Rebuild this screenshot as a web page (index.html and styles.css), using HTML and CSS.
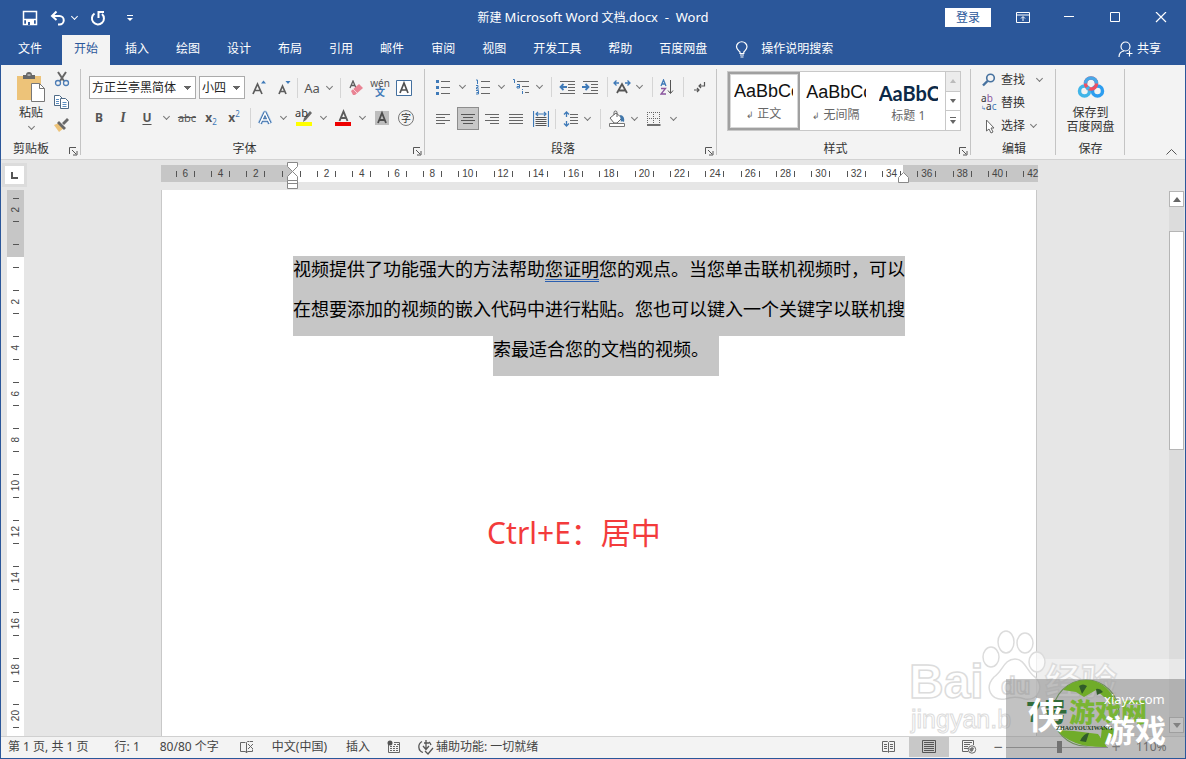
FILE: index.html
```html
<!DOCTYPE html>
<html lang="zh-CN">
<head>
<meta charset="utf-8">
<meta name="viewport" content="width=device-width, initial-scale=1">
<title>新建 Microsoft Word 文档.docx - Word</title>
<link rel="stylesheet" href="styles.css">
</head>
<body>
<header class="titlebar">
  <div class="quick">
    <button aria-label="保存"><svg width="16" height="16" viewBox="0 0 16 16"><path d="M1.500 1.500h13v13h-13zM2 9.500h12" fill="none" stroke="#fff" stroke-width="1.500"/><path d="M4 10h8v4H4z" fill="#fff"/><path d="M6 12h2v3H6z" fill="#2b579a"/></svg></button>
    <button aria-label="撤消"><svg width="16" height="16" viewBox="0 0 16 16"><path d="M2 6h7.500a4 4 0 0 1 0 8.500H8M6.500 1.500L2 6l4.500 4" fill="none" stroke="#fff" stroke-width="2"/></svg></button>
    <button class="chev light" aria-label="撤消列表"></button>
    <button class="redo" aria-label="重复"><svg width="16" height="16" viewBox="0 0 16 16"><path d="M4.500 3.500A6 6 0 1 0 12 4M8.500 8V2H14" fill="none" stroke="#fff" stroke-width="2"/></svg></button>
    <button class="custom" aria-label="自定义快速访问工具栏"><svg width="8" height="8" viewBox="0 0 8 8"><path d="M1 1.500h6" stroke="#fff"/><path d="M1 4h6L4 7z" fill="#fff"/></svg></button>
  </div>
  <h1 class="doc-title">新建 <span>Microsoft Word</span> 文档<span>.docx&nbsp; -&nbsp; Word</span></h1>
  <div class="window-tools">
    <button class="login">登录</button>
    <button class="win" aria-label="功能区显示选项"><svg width="14" height="12" viewBox="0 0 14 12"><path d="M.5.5h13v10H.5zM.5 3h13M7 9V5M5 6.500l2-2 2 2" fill="none" stroke="#fff"/></svg></button>
    <button class="win" aria-label="最小化"><svg width="12" height="12" viewBox="0 0 12 12"><path d="M1 4.500h10" stroke="#fff"/></svg></button>
    <button class="win" aria-label="最大化"><svg width="12" height="12" viewBox="0 0 12 12"><path d="M1.500.5h9v9h-9z" fill="none" stroke="#fff"/></svg></button>
    <button class="win" aria-label="关闭"><svg width="12" height="12" viewBox="0 0 12 12"><path d="M1 0l10 10M11 0L1 10" stroke="#fff" stroke-width="1.200"/></svg></button>
  </div>
</header>
<nav class="tabs">
  <button class="file">文件</button>
  <button class="active">开始</button>
  <button>插入</button><button>绘图</button><button>设计</button><button>布局</button><button>引用</button><button>邮件</button><button>审阅</button><button>视图</button><button>开发工具</button><button>帮助</button><button>百度网盘</button>
  <button class="tell"><svg width="14" height="17" viewBox="0 0 14 17"><path d="M5 12.500V11C3 9 1.500 8 1.500 5.800a5.200 5 0 0 1 10.500 0C12 8 10.500 9 8.800 11v1.500zM5 14h4M5.500 16h3" fill="none" stroke="#fff" stroke-width="1.200"/></svg>操作说明搜索</button>
  <button class="share"><svg width="16" height="17" viewBox="0 0 16 17"><circle cx="7.500" cy="5.500" r="4.500" fill="none" stroke="#fff" stroke-width="1.200"/><path d="M1 16c0-3 2-5.500 5-6M11.500 9.500v6M8.500 12.500h6" fill="none" stroke="#fff" stroke-width="1.200"/></svg>共享</button>
</nav>

<main class="ribbon">
  <section class="group clipboard">
    <div class="clip-body">
      <button class="paste"><svg width="28" height="30" viewBox="0 0 28 30"><path d="M0 4h24v24H0z" fill="#edc379"/><path d="M6 3h3a3 3 0 0 1 6 0h3v4H6z" fill="#686868"/><path d="M10.500 3h3" stroke="#eee"/><path d="M14.500 11.500h8l5 5v13h-13z" fill="#fff" stroke="#777"/><path d="M22.500 11.500v5h5" fill="none" stroke="#777"/></svg><span>粘贴</span><i class="chev"></i></button>
      <div class="clip-side">
        <button aria-label="剪切"><svg width="16" height="16" viewBox="0 0 16 16"><path d="M4 1l6 9M12 1L6 10" stroke="#666" stroke-width="2"/><circle cx="4" cy="12" r="2.500" fill="none" stroke="#4c7cb5" stroke-width="1.300"/><circle cx="12" cy="12" r="2.500" fill="none" stroke="#4c7cb5" stroke-width="1.300"/></svg></button>
        <button aria-label="复制"><svg width="16" height="16" viewBox="0 0 16 16"><path d="M.5 1.500h5l3 3v7h-8z" fill="#fff" stroke="#4e6a86"/><path d="M6.500 4.500h5l3 3v7h-8z" fill="#fff" stroke="#4e6a86"/><path d="M2 5.500h3M2 7.500h3M2 9.500h3M8.500 8.500h4M8.500 10.500h4M8.500 12.500h4" stroke="#5b8dc0"/></svg></button>
        <button aria-label="格式刷"><svg width="16" height="16" viewBox="0 0 16 16"><path d="M0 8l5-2 5 5-5 4z" fill="#edc379"/><path d="M5 4l7 7-2 2-7-7zM8 6l5-5 2 2-5 5z" fill="#686868"/></svg></button>
      </div>
    </div>
    <h2>剪贴板</h2><button class="launch" aria-label="剪贴板设置"><svg width="9" height="9" viewBox="0 0 9 9"><path d="M.5 7V.5H7M3 3l4 4M8 4v4H4" fill="none" stroke="#555"/></svg></button>
  </section>

  <section class="group font">
    <div class="row font-a">
      <select class="face" aria-label="字体"><option>方正兰亭黑简体</option></select>
      <select class="size" aria-label="字号"><option>小四</option></select>
      <button aria-label="增大字号"><svg width="16" height="16" viewBox="0 0 16 16"><path d="M2 14L6.500 4l4.500 10M3.500 10.500h6" fill="none" stroke="#5c5c5c" stroke-width="1.700"/><path d="M10 3.500h5L12.500.5z" fill="#3f7ab8"/></svg></button>
      <button aria-label="减小字号"><svg width="16" height="16" viewBox="0 0 16 16"><path d="M3 14l3.500-8 3.500 8M4.500 11.500h4" fill="none" stroke="#5c5c5c" stroke-width="1.700"/><path d="M9.500 1h5L12 4z" fill="#3f7ab8"/></svg></button>
      <i class="sep"></i>
      <button class="aa" aria-label="更改大小写">Aa</button><button class="chev" aria-label="大小写选项"></button>
      <i class="sep"></i>
      <button aria-label="清除格式"><svg width="16" height="16" viewBox="0 0 16 16"><path d="M2 8L5 1l3 7M3 5.500h4" fill="none" stroke="#5c5c5c" stroke-width="1.300"/><path d="M3 11L11 4l4 4-8 7H5z" fill="#e98494"/><path d="M5 9l4 4" stroke="#f8d2d7"/></svg></button>
      <button class="phonetic" aria-label="拼音指南"><span>wén</span><span>文</span></button>
      <button aria-label="字符边框"><svg width="18" height="18" viewBox="0 0 18 18"><path d="M1.500 1.500h15v15h-15z" fill="#fff" stroke="#44709f"/><path d="M5 14L9 4l4 10M6 11h6" fill="none" stroke="#505050" stroke-width="1.700"/></svg></button>
    </div>
    <div class="row font-b">
      <button class="glyph b" aria-label="加粗">B</button>
      <button class="glyph i" aria-label="倾斜">I</button>
      <button class="glyph u" aria-label="下划线">U</button><button class="chev" aria-label="下划线选项"></button>
      <button class="glyph s" aria-label="删除线">abc</button>
      <button class="glyph" aria-label="下标">x<sub>2</sub></button>
      <button class="glyph" aria-label="上标">x<sup>2</sup></button>
      <i class="sep"></i>
      <button aria-label="文本效果"><svg width="18" height="18" viewBox="0 0 18 18"><path d="M4 14.500L9 4l5 10.500M6 11h6" fill="none" stroke="#b4cfec" stroke-width="5" stroke-linejoin="round"/><path d="M4 14.500L9 4l5 10.500M6 11h6" fill="none" stroke="#3e6fa8" stroke-width="3.400" stroke-linejoin="round"/><path d="M4 14.500L9 4l5 10.500M6 11h6" fill="none" stroke="#fff" stroke-width="1.500"/></svg></button>
      <button class="chev" aria-label="文本效果选项"></button>
      <button class="highlight" aria-label="突出显示"><span>ab</span><svg width="18" height="18" viewBox="0 0 18 18"><path d="M15 2l2 2-6 7-3 2 1-4z" fill="#6a6a6a"/><path d="M1 13h16v4H1z" fill="#ff0"/></svg></button>
      <button class="chev" aria-label="突出显示选项"></button>
      <button aria-label="字体颜色"><svg width="18" height="18" viewBox="0 0 18 18"><path d="M5.500 12L9.500 2.500l4 9.500M7 9h5" fill="none" stroke="#5c5c5c" stroke-width="1.900"/><path d="M1 13h16v4H1z" fill="#e00"/></svg></button>
      <button class="chev" aria-label="字体颜色选项"></button>
      <button aria-label="字符底纹"><svg width="18" height="18" viewBox="0 0 18 18"><path d="M2 2h14v14H2z" fill="#bdbdbd"/><path d="M5 14L9 4l4 10M6 11h6" fill="none" stroke="#4c4c4c" stroke-width="1.800"/></svg></button>
      <button class="circled" aria-label="带圈字符">字</button>
    </div>
    <h2>字体</h2><button class="launch" aria-label="字体设置"><svg width="9" height="9" viewBox="0 0 9 9"><path d="M.5 7V.5H7M3 3l4 4M8 4v4H4" fill="none" stroke="#555"/></svg></button>
  </section>

  <section class="group para">
    <div class="row para-a">
      <button aria-label="项目符号"><svg width="16" height="16" viewBox="0 0 16 16"><path d="M1 1h3v3H1zM1 7h3v3H1zM1 13h3v3H1z" fill="#3f7ab8"/><path d="M6 2.500h9M6 8.500h9M6 14.500h9" stroke="#666"/></svg></button><button class="chev" aria-label="项目符号选项"></button>
      <button aria-label="编号"><svg width="16" height="16" viewBox="0 0 16 16"><path d="M1 1h1.500v4M1 6.500h2v2H1.500V10H4M1 11.500h2.500V15H1M1.500 13.500h2" fill="none" stroke="#3f7ab8"/><path d="M6 2.500h9M6 8.500h9M6 14.500h9" stroke="#666"/></svg></button><button class="chev" aria-label="编号选项"></button>
      <button aria-label="多级列表"><svg width="18" height="16" viewBox="0 0 18 16"><path d="M1 .5h1.500V4M5 5.500h2.500V9H5V7.500h2M10.500 10v1M10.500 12v3" fill="none" stroke="#3f7ab8"/><path d="M5 2.500h12M10 7.500h7M13 13.500h4" stroke="#666"/></svg></button><button class="chev" aria-label="多级列表选项"></button>
      <i class="sep"></i>
      <button aria-label="减少缩进"><svg width="16" height="14" viewBox="0 0 16 14"><path d="M1 1.500h15M9 4.500h7M9 7.500h7M9 10.500h7M1 13.500h15" stroke="#666"/><path d="M8 7H1.500M4.500 4l-3 3 3 3" fill="none" stroke="#3f7ab8" stroke-width="1.800"/></svg></button>
      <button aria-label="增加缩进"><svg width="16" height="14" viewBox="0 0 16 14"><path d="M1 1.500h15M9 4.500h7M9 7.500h7M9 10.500h7M1 13.500h15" stroke="#666"/><path d="M0 7h6.500M3.500 4l3 3-3 3" fill="none" stroke="#3f7ab8" stroke-width="1.800"/></svg></button>
      <i class="sep"></i>
      <button aria-label="中文版式"><svg width="18" height="16" viewBox="0 0 18 16"><path d="M4 14L9 5l5 9M6 11.500h6" fill="none" stroke="#555" stroke-width="1.800"/><path d="M1.500 4H6M3.500 1.500L1 4l2.500 2.500M16.500 4H12M14.500 1.500L17 4l-2.500 2.500" fill="none" stroke="#3f7ab8" stroke-width="1.300"/></svg></button><button class="chev" aria-label="中文版式选项"></button>
      <i class="sep"></i>
      <button aria-label="排序"><svg width="14" height="16" viewBox="0 0 14 16"><path d="M1 7L3.500 1 6 7M2 5h3" fill="none" stroke="#3f7ab8" stroke-width="1.300"/><path d="M1 9.500h4.500l-4.500 5.500h5" fill="none" stroke="#8b569f" stroke-width="1.300"/><path d="M10.500 1v13M8 11.500l2.500 3 2.500-3" fill="none" stroke="#555"/></svg></button>
      <i class="sep"></i>
      <button aria-label="编辑标记"><svg width="14" height="14" viewBox="0 0 14 14"><path d="M12.500 2v4H7M9 4L7 6l2 2M2 10h5M5 8l2 2-2 2" fill="none" stroke="#555" stroke-width="1.200"/></svg></button>
    </div>
    <div class="row para-b">
      <button aria-label="左对齐"><svg width="16" height="12" viewBox="0 0 16 12"><path d="M1 1.500h14M1 4.500h9M1 7.500h14M1 10.500h9" stroke="#666"/></svg></button>
      <button class="pressed" aria-label="居中"><svg width="16" height="12" viewBox="0 0 16 12"><path d="M1 1.500h14M3 4.500h10M1 7.500h14M3 10.500h10" stroke="#555"/></svg></button>
      <button aria-label="右对齐"><svg width="16" height="12" viewBox="0 0 16 12"><path d="M1 1.500h14M6 4.500h9M1 7.500h14M6 10.500h9" stroke="#666"/></svg></button>
      <button aria-label="两端对齐"><svg width="16" height="12" viewBox="0 0 16 12"><path d="M1 1.500h14M1 4.500h14M1 7.500h14M1 10.500h14" stroke="#666"/></svg></button>
      <button aria-label="分散对齐"><svg width="16" height="16" viewBox="0 0 16 16"><path d="M.5 0v16M15.500 0v16M3 3h10M5 1L3 3l2 2M11 1l2 2-2 2" fill="none" stroke="#3f7ab8" stroke-width="1.200"/><path d="M2.500 6.500h11M2.500 8.500h11M2.500 10.500h11M2.500 12.500h11M2.500 14.500h11" stroke="#555"/></svg></button>
      <i class="sep"></i>
      <button aria-label="行距"><svg width="16" height="16" viewBox="0 0 16 16"><path d="M7 3.500h8M7 6.500h8M7 9.500h8M7 12.500h8" stroke="#666"/><path d="M3.500 1v5M1 3.500L3.500 1 6 3.500M3.500 15v-5M1 12.500L3.500 15 6 12.500" fill="none" stroke="#3f7ab8" stroke-width="1.300"/></svg></button><button class="chev" aria-label="行距选项"></button>
      <i class="sep"></i>
      <button aria-label="底纹"><svg width="18" height="18" viewBox="0 0 18 18"><path d="M2 8l6-5 6 5-5 5H6z" fill="#fff" stroke="#666"/><path d="M6 5V2.500a1.500 1.500 0 0 1 3 0V7" fill="none" stroke="#666"/><path d="M12 5c3 0 5 3 4 7-1-1-3-1-3 0z" fill="#4177ab"/><path d="M1.500 13.500h15v3h-15z" fill="#fff" stroke="#777"/></svg></button><button class="chev" aria-label="底纹选项"></button>
      <button aria-label="边框"><svg width="14" height="14" viewBox="0 0 14 14"><path d="M.5 0v12M6.500 0v12M12.500 0v12M0 .5h13M0 6.500h13" stroke="#666" stroke-dasharray="1 1"/><path d="M0 13h13.500" stroke="#444" stroke-width="1.500"/></svg></button><button class="chev" aria-label="边框选项"></button>
    </div>
    <h2>段落</h2><button class="launch" aria-label="段落设置"><svg width="9" height="9" viewBox="0 0 9 9"><path d="M.5 7V.5H7M3 3l4 4M8 4v4H4" fill="none" stroke="#555"/></svg></button>
  </section>

  <section class="group styles">
    <div class="gallery">
      <button class="style current"><b>AaBbCc</b><span><small>↲</small> 正文</span></button>
      <button class="style"><b>AaBbCc</b><span><small>↲</small> 无间隔</span></button>
      <button class="style heading"><b>AaBbCc</b><span>标题 1</span></button>
      <div class="gallery-nav">
        <button class="off" aria-label="上一行"><svg width="6" height="4" viewBox="0 0 6 4"><path d="M0 4h6L3 0z" fill="#bbb"/></svg></button>
        <button aria-label="下一行"><svg width="6" height="4" viewBox="0 0 6 4"><path d="M0 0h6L3 4z" fill="#666"/></svg></button>
        <button aria-label="更多样式"><svg width="6" height="7" viewBox="0 0 6 7"><path d="M0 .5h6" stroke="#666"/><path d="M0 3h6L3 7z" fill="#666"/></svg></button>
      </div>
    </div>
    <h2>样式</h2><button class="launch" aria-label="样式设置"><svg width="9" height="9" viewBox="0 0 9 9"><path d="M.5 7V.5H7M3 3l4 4M8 4v4H4" fill="none" stroke="#555"/></svg></button>
  </section>

  <section class="group edit">
    <div class="edit-body">
      <button><svg width="16" height="14" viewBox="0 0 16 14"><circle cx="9.500" cy="5" r="3.800" fill="none" stroke="#47729f" stroke-width="1.600"/><path d="M6.500 8L2 12.500" stroke="#47729f" stroke-width="2.400"/></svg>查找<i class="chev wide"></i></button>
      <button><span class="swap"><span>a<em>b</em></span><span><small>↳</small>a<strong>c</strong></span></span>替换</button>
      <button><svg width="16" height="15" viewBox="0 0 16 15"><path d="M5.500 1v11l2.500-2 2 4 2-1-2-4h3z" fill="#fff" stroke="#666"/></svg>选择<i class="chev"></i></button>
    </div>
    <h2>编辑</h2>
  </section>

  <section class="group save">
    <button class="cloud"><svg width="28" height="22" viewBox="0 0 28 22"><g fill="none" stroke-width="3.500"><circle cx="7.500" cy="15" r="5" stroke="#41b5e8"/><circle cx="20.500" cy="15" r="5" stroke="#2c9df0"/><circle cx="14" cy="7.500" r="5.500" stroke="#f04f62"/><path d="M8.500 7.500a5.500 5.500 0 0 1 11 0" stroke="#48a8e8"/><path d="M10 11l1.500 2.500" stroke="#41b5e8"/></g></svg><span>保存到<br>百度网盘</span></button>
    <h2>保存</h2>
  </section>
  <button class="collapse" aria-label="折叠功能区"><svg width="11" height="6" viewBox="0 0 11 6"><path d="M.5 5.500l5-5 5 5" fill="none" stroke="#555"/></svg></button>
</main>

<div class="workspace">
  <div class="corner"><button aria-label="制表符"><svg width="7" height="7" viewBox="0 0 7 7"><path d="M1 0v6h6" fill="none" stroke="#555" stroke-width="2"/></svg></button></div>
  <div class="hrow">
    <div class="hruler">
      <div class="ticks"><i>6</i><i>4</i><i>2</i><i></i><i>2</i><i>4</i><i>6</i><i>8</i><i>10</i><i>12</i><i>14</i><i>16</i><i>18</i><i>20</i><i>22</i><i>24</i><i>26</i><i>28</i><i>30</i><i>32</i><i>34</i><i>36</i><i>38</i><i>40</i><i>42</i></div>
    </div>
    <svg class="indent left" width="12" height="28" viewBox="0 0 12 28"><path d="M.5.5h10v4l-5 5-5-5zM.5 18.500v-4l5-5 5 5v4zM.5 18.500v8h10v-8M.5 21.500h10" fill="#fff" stroke="#888"/></svg>
    <svg class="indent right" width="12" height="12" viewBox="0 0 12 12"><path d="M.5 10.500v-5l5-5 5 5v5z" fill="#fff" stroke="#888"/></svg>
  </div>
  <div class="vruler"><i><span>2</span></i><i></i><i><span>2</span></i><i><span>4</span></i><i><span>6</span></i><i><span>8</span></i><i><span>10</span></i><i><span>12</span></i><i><span>14</span></i><i><span>16</span></i><i><span>18</span></i><i><span>20</span></i></div>
  <div class="canvas">
    <article class="page">
      <p class="selected"><span>视频提供了功能强大的方法帮助<u>您证明</u>您的观点。当您单击联机视频时，可以</span><span>在想要添加的视频的嵌入代码中进行粘贴。您也可以键入一个关键字以联机搜</span><span class="last">索最适合您的文档的视频。</span></p>
      <p class="shortcut">Ctrl+E：居中</p>
    </article>
  </div>
  <div class="scroll">
    <button aria-label="向上滚动"><svg width="8" height="5" viewBox="0 0 8 5"><path d="M0 5h8L4 0z" fill="#666"/></svg></button>
    <div class="track"><div class="thumb"></div></div>
    <button aria-label="向下滚动"><svg width="8" height="5" viewBox="0 0 8 5"><path d="M0 0h8L4 5z" fill="#777"/></svg></button>
  </div>
</div>

<footer class="status">
  <span class="pages">第 1 页, 共 1 页</span><span class="line">行: 1</span><span class="words">80/80 个字</span>
  <button class="proof" aria-label="校对"><svg width="16" height="14" viewBox="0 0 16 14"><path d="M6.500 2.500h-5v9h5l1 1.500 1-1.500h5v-2M7.500 13V2.500l1-1h2M9 4l5 5M14 4L9 9M11 1.500h3" fill="none" stroke="#666"/></svg></button>
  <span class="lang">中文(中国)</span><span class="mode">插入</span>
  <button class="macro" aria-label="宏"><svg width="14" height="14" viewBox="0 0 14 14"><path d="M1.500 5v7.500h11v-10H7" fill="none" stroke="#666"/><circle cx="3" cy="3" r="2.500" fill="#555"/><path d="M7 4.500h5M3 6.500h9M3 8.500h9M3 10.500h9" stroke="#666" stroke-dasharray="2 1"/></svg></button>
  <button class="access"><svg width="18" height="16" viewBox="0 0 18 16"><path d="M5 2.500a6 6 0 0 0 1 11M12 3a6 6 0 0 1 2 3M9 1v9M6 7l3 3.500L12 7M7 4h5M8 12l3 3 5-6" fill="none" stroke="#555" stroke-width="1.300"/></svg>辅助功能: 一切就绪</button>
  <div class="views">
    <button aria-label="阅读视图"><svg width="16" height="14" viewBox="0 0 16 14"><path d="M1.500 1.500h5l1 1 1-1h5v10h-5l-1 1-1-1h-5zM7.500 3v9M3 4.500h3M3 6.500h3M3 8.500h3M9 4.500h3M9 6.500h3M9 8.500h3" fill="none" stroke="#666"/></svg></button>
    <button class="on" aria-label="页面视图"><svg width="16" height="14" viewBox="0 0 16 14"><path d="M1.500.5h13v12h-13zM3 2.500h10M3 4.500h10M3 6.500h10M3 8.500h10M3 10.500h10" fill="none" stroke="#555"/></svg></button>
    <button aria-label="Web 版式"><svg width="16" height="14" viewBox="0 0 16 14"><path d="M7 11.500H1.500V.5h11V5M3 2.500h8M3 4.500h6M3 6.500h4M3 8.500h4" fill="none" stroke="#666"/><circle cx="11" cy="9.500" r="3.700" fill="#fff" stroke="#666"/><path d="M8 9l3-2 2 1-1 3-2 1z" fill="#777"/></svg></button>
  </div>
  <div class="zoom"><button aria-label="缩小">−</button><input type="range" min="10" max="200" value="110" aria-label="显示比例"><button aria-label="放大">+</button><span>110%</span></div>
</footer>

<svg class="marks" width="280" height="132" viewBox="0 0 280 132" aria-hidden="true">
  <path d="M131 33h149v20H131z" fill="#fff" fill-opacity=".35"/>
  <g fill="#fff" fill-opacity=".7" stroke="#dcdcdc" stroke-width="1.500">
    <ellipse cx="85" cy="31" rx="8" ry="10"/><ellipse cx="100" cy="16" rx="8" ry="11"/><ellipse cx="119" cy="17" rx="8" ry="10"/><ellipse cx="131" cy="36" rx="8" ry="10"/>
    <path d="M109 33c10 0 12 13 20 18 10 10 3 24-10 22-6-2-14-2-20 0-14 2-21-11-11-22 9-6 10-18 21-18z"/>
    <text class="wm-bai" x="3" y="72">Bai</text><text class="wm-du" x="95" y="68">du</text><text class="wm-cjk" x="139" y="69">经验</text><text class="wm-url" x="5" y="102">jingyan.b</text>
  </g>
  <path d="M100 53h180v79H100z" fill="#8c8c8c" fill-opacity=".53"/>
  <circle cx="180" cy="87" r="33" fill="none" stroke="#6c8b59" stroke-width="1.200"/>
  <path d="M157 64q9-10 23-10 19 0 30 21l-12-4-8-7-12 7-8-5zM151 104q14 18 50 17l-9-13-24-3z" fill="#70ac29"/>
  <path d="M196 101l15 2q-5 12-17 17z" fill="#70ac29"/>
  <path d="M173 60q4-3 8 0l-5 8zM190 63q4-1 7 3l-6 3zM174 115q4-8 9-8l-3 9z" fill="#315c2a"/>
  <g class="wm-game"><text x="120" y="96" fill="#316c39">7号</text><text x="163" y="96" fill="#79b534">游戏网</text></g>
  <text class="wm-white" x="122" y="103" font-size="36">侠</text><text class="wm-white" x="198" y="116" font-size="31">游戏</text>
  <text class="wm-small" x="150" y="104">ZHAOYOUXIWANG</text>
  <text class="wm-site" x="198" y="78">xiayx.com</text>
</svg>
</body>
</html>
```
FILE: styles.css
```css
* { box-sizing: border-box; }
html, body { height: 100%; }
body {
  margin: 0; display: flex; flex-direction: column; position: relative; overflow: hidden;
  border: 1px solid #2b579a; border-top: 0; background: #e6e6e6; color: #333;
  font: 12px/16px "Noto Sans", "Noto Sans CJK SC", sans-serif;
}
button { font: inherit; color: inherit; background: none; border: 0; padding: 0; margin: 0; display: flex; align-items: center; justify-content: center; white-space: nowrap; }
svg { display: block; flex: none; }
i { font-style: normal; }
h1, h2, p { margin: 0; font-weight: 400; }

.titlebar { flex: none; height: 35px; display: grid; grid-template-columns: 1fr auto 1fr; align-items: center; background: #2b579a; color: #fff; }
.quick { display: flex; align-items: center; padding-left: 21px; gap: 12px; }
.quick .chev { width: 8px; margin-left: -8px; }
.quick .custom { margin-left: 8px; }
.doc-title { font-size: 12px; line-height: 32px; }
.doc-title span { font-size: 13px; }
.window-tools { display: flex; justify-content: flex-end; align-items: center; padding-right: 1px; }
.login { width: 46px; height: 19px; background: #fff; color: #2b579a; margin-right: 9px; }
.win { width: 46px; height: 32px; }

.tabs { flex: none; height: 30px; display: flex; gap: 3px; background: #2b579a; color: #fff; }
.tabs button { padding: 0 12px; height: 30px; padding-bottom: 2px; }
.tabs .file { margin-left: 5px; margin-right: 5px; }
.tabs .active { background: #f3f3f3; color: #2b579a; }
.tabs .tell { gap: 12px; margin-left: 1px; }
.tabs .share { margin-left: auto; margin-right: 12px; gap: 3px; }

.ribbon { flex: none; height: 95px; display: flex; position: relative; background: #f3f3f3; border-bottom: 1px solid #d2d2d2; }
.group { position: relative; display: flex; flex-direction: column; padding: 11px 9px 2px 8px; }
.group::after { content: ""; position: absolute; right: 0; top: 4px; bottom: 4px; width: 1px; background: #c4c4c4; }
.group h2 { margin-top: auto; font-size: 12px; line-height: 16px; text-align: center; }
.launch { position: absolute; right: 3px; bottom: 3px; }
.row { display: grid; height: 22px; margin-bottom: 9px; align-items: center; }
.row > * { justify-self: center; }
.row > .sep { width: 1px; height: 20px; background: #d5d5d5; }
.chev { width: 8px; height: 8px; display: flex; align-items: center; justify-content: center; flex: none; }
.chev::after { content: ""; width: 4px; height: 4px; border: solid #777; border-width: 0 1px 1px 0; transform: rotate(45deg); margin-top: -3px; }
.chev.light::after { border-color: #fff; }

.clipboard { width: 80px; }
.clip-body { display: flex; gap: 7px; margin-top: -5px; padding-left: 8px; }
.clipboard h2 { text-align: left; padding-left: 4px; }
.paste { flex-direction: column; width: 28px; }
.paste span { margin-top: 3px; }
.paste .chev { margin-top: 3px; }
.clip-side { display: flex; flex-direction: column; gap: 7px; padding-left: 2px; }
.font { width: 344px; }
.font h2 { padding-right: 16px; }
.font-a { grid-template-columns: 110px 46px 28px 22px 4px 26px 8px 14px 18px 30px 18px; }
.font-b { grid-template-columns: 20px 28px 20px 18px 24px 24px 22px 10px 20px 16px 26px 12px 28px 10px 30px 18px; }
select { appearance: none; height: 23px; border: 1px solid #ababab; border-radius: 0; color: #222; font: inherit; padding: 0 2px; background: #fff conic-gradient(from 315deg at 50% 100%, #666 90deg, transparent 0) no-repeat right 4px center / 7px 4px; }
.row select { justify-self: start; }
.face { width: 107px; }
.size { width: 46px; }
.aa { color: #555; font-size: 13px; }
.phonetic { flex-direction: column; font-size: 10px; line-height: 9px; color: #555; }
.phonetic span + span { color: #3f7ab8; font-weight: 700; }
.glyph { color: #555; font-weight: 700; }
.glyph.i { font-family: "Liberation Serif", serif; font-style: italic; font-size: 14px; }
.glyph.u { text-decoration: underline; text-underline-offset: 2px; }
.glyph.s { font-size: 11px; font-weight: 400; text-decoration: line-through; }
sub, sup { font-size: 8px; line-height: 8px; color: #3f7ab8; font-weight: 400; }
sub { align-self: flex-end; }
sup { align-self: flex-start; }
.highlight { position: relative; }
.highlight span { position: absolute; left: 0; top: -4px; font-size: 11px; }
.circled { width: 16px; height: 16px; border: 1px solid #777; border-radius: 50%; font-size: 10px; }

.para { width: 292px; padding-left: 9px; }
.para h2 { padding-right: 16px; }
.para-a { grid-template-columns: 18px 20px 22px 14px 26px 10px 14px 18px 28px 6px 24px 10px 16px 14px 18px 14px; }
.para-b { grid-template-columns: 18px 32px 16px 32px 18px 10px 22px 10px 16px 18px 16px 24px 14px; }
.pressed { width: 22px; height: 23px; background: #c8c8c8; border: 1px solid #8d8d8d; }

.styles { width: 254px; padding-top: 6px; padding-left: 10px; }
.styles h2 { padding-right: 18px; }
.gallery { display: flex; height: 60px; width: 234px; border: 1px solid #c8c8c8; background: #fff; }
.style { flex: 1; min-width: 0; flex-direction: column; overflow: hidden; padding: 3px 7px 0 6px; align-items: stretch; color: #666; }
.style b { font: 18px/26px "Liberation Sans", sans-serif; color: #111; overflow: hidden; text-align: left; }
.style span { line-height: 20px; }
.style small { font-size: 9px; }
.style.current { border: 2px solid #a0a0a0; outline: 1px solid #d8d8d8; outline-offset: -3px; padding: 1px 5px 0 4px; }
.style.heading b { font-family: Lato, sans-serif; font-weight: 700; color: #0c2948; font-size: 20px; }
.gallery-nav { width: 15px; display: flex; flex-direction: column; border-left: 1px solid #c8c8c8; }
.gallery-nav button { flex: 1; }
.gallery-nav button + button { border-top: 1px solid #c8c8c8; }
.gallery-nav .off { background: #ececec; }

.edit { width: 85px; padding-top: 6px; padding-left: 10px; }
.edit-body { display: flex; flex-direction: column; gap: 5px; }
.edit-body button { justify-content: flex-start; height: 18px; gap: 4px; }
.edit-body svg, .swap { width: 16px; }
.edit-body .chev.wide { margin-left: 6px; }
.swap { display: flex; flex-direction: column; font-size: 10px; line-height: 8px; text-align: left; }
.swap em { color: #8b569f; font-style: normal; }
.swap small { font-size: 6px; color: #3f7ab8; }
.swap strong { color: #3f7ab8; font-weight: 400; }
.save { width: 69px; padding-top: 11px; padding-left: 0; padding-right: 0; }
.cloud { flex-direction: column; gap: 8px; line-height: 14px; }
.collapse { position: absolute; right: 8px; bottom: 4px; }

.workspace { flex: 1; min-height: 0; display: grid; grid-template-columns: 29px 1fr 17px; grid-template-rows: 30px minmax(0, 1fr); background: #e6e6e6; }
.corner { padding: 3px 1px; background: #e6e6e6; }
.corner button { width: 25px; height: 24px; background: #fff; border: 3px solid #dcdcdc; }
.hrow { grid-column: 2 / 4; margin-right: 17px; padding-top: 5px; display: grid; justify-content: center; position: relative; }
.hrow > * { grid-area: 1 / 1; }
.hruler { width: 877px; height: 17px; background: linear-gradient(90deg, #c6c6c6 132px, #fff 132px 742px, #c6c6c6 742px); }
.ticks { display: grid; grid-template-columns: repeat(25, 1fr); width: 883px; margin-left: 7px; }
.ticks i { display: grid; grid-template-columns: 1fr 17px 1fr; grid-template-areas: "a b c"; align-items: center; justify-items: center; font: 10px/17px "Liberation Sans", sans-serif; color: #444; text-align: center; height: 17px; white-space: nowrap; }
.ticks i::before, .ticks i::after { content: ""; width: 1px; height: 6px; background: #555; }
.ticks i::before { grid-area: a; justify-self: end; }
.ticks i::after { grid-area: c; justify-self: start; }
.ticks i:last-child::after { display: none; }
.indent { position: relative; }
.indent.left { left: 126px; top: -3px; }
.indent.right { left: 737px; top: 7px; }
.vruler { margin: 0 6px; width: 17px; overflow: hidden; background: linear-gradient(#c6c6c6 67px, #fff 67px); font: 10px/17px "Liberation Sans", sans-serif; color: #444; }
.vruler i { height: 46px; display: grid; grid-template-rows: 1fr 22px 1fr; grid-template-areas: "a" "b" "c"; justify-items: center; align-items: center; }
.vruler i:first-child { margin-top: -3px; }
.vruler i::before, .vruler i::after { content: ""; width: 6px; height: 1px; background: #555; }
.vruler i::before { grid-area: a; align-self: end; }
.vruler i::after { grid-area: c; align-self: start; }
.vruler span { grid-area: b; writing-mode: vertical-rl; transform: rotate(180deg); }

.canvas { display: flex; justify-content: center; min-width: 0; overflow: hidden; }
.page { width: 876px; flex: none; background: #fff; border: 1px solid #c8c8c8; border-width: 0 1px; padding-top: 66px; }
.selected { display: flex; flex-direction: column; align-items: center; color: #000; font: 18px/24px "Noto Sans CJK SC", sans-serif; }
.selected span { background: #c6c6c6; padding-bottom: 16px; white-space: nowrap; }
.selected .last { padding-right: 10px; margin-left: 14px; }
.selected u { text-decoration: underline double #2b5fb0 1px; text-underline-offset: 3px; }
.shortcut { margin: 135px 50px 0 0; text-align: center; font-size: 30px; line-height: 44px; color: #f33b3b; }

.scroll { display: flex; flex-direction: column; padding: 1px 1px 3px 1px; }
.scroll button { height: 16px; background: #fff; border: 1px solid #b5b5b5; }
.track { flex: 1; background: #dcdcdc; padding-top: 24px; }
.thumb { height: 45%; background: #fff; border: 1px solid #b5b5b5; }

.status { flex: none; height: 22px; display: flex; align-items: center; background: #f3f3f3; border-top: 1px solid #d0d0d0; border-bottom: 1px solid #f3f3f3; padding-left: 7px; color: #444; white-space: nowrap; }
.pages { margin-right: 26px; }
.line { margin-right: 20px; }
.words { margin-right: 20px; }
.proof { margin-right: 17px; }
.lang { margin-right: 19px; }
.mode { margin-right: 17px; }
.macro { margin-right: 16px; }
.access { gap: 1px; }
.views { display: flex; margin-left: auto; height: 20px; }
.views button { width: 40px; }
.views .on { background: #c8c8c8; }
.zoom { display: flex; align-items: center; width: 196px; padding-left: 4px; gap: 3px; }
.zoom button { width: 10px; font-size: 16px; color: #666; }
.zoom input { appearance: none; width: 102px; height: 16px; margin: 0; background: linear-gradient(#888, #888) center / 100% 1px no-repeat; }
.zoom input::-webkit-slider-thumb { appearance: none; width: 5px; height: 12px; background: #555; }
.zoom span { margin-left: 12px; }

.marks { position: absolute; right: -1px; bottom: 0; pointer-events: none; }
.wm-bai { font: 700 48px "Liberation Sans", sans-serif; }
.wm-du { font: 700 24px "Liberation Sans", sans-serif; }
.wm-cjk { font: 700 36px "Noto Sans CJK SC", sans-serif; }
.wm-url { font: 25px "Liberation Sans", sans-serif; stroke-width: 1px; }
.wm-game { font: 900 26px "Noto Sans CJK SC", sans-serif; }
.wm-small { font: 700 6px "Liberation Serif", serif; fill: #243e24; }
.wm-white { font-family: "Noto Sans CJK SC", sans-serif; font-weight: 700; fill: #fff; }
.wm-site { font: 13px "Noto Sans", sans-serif; fill: #fff; }
```
